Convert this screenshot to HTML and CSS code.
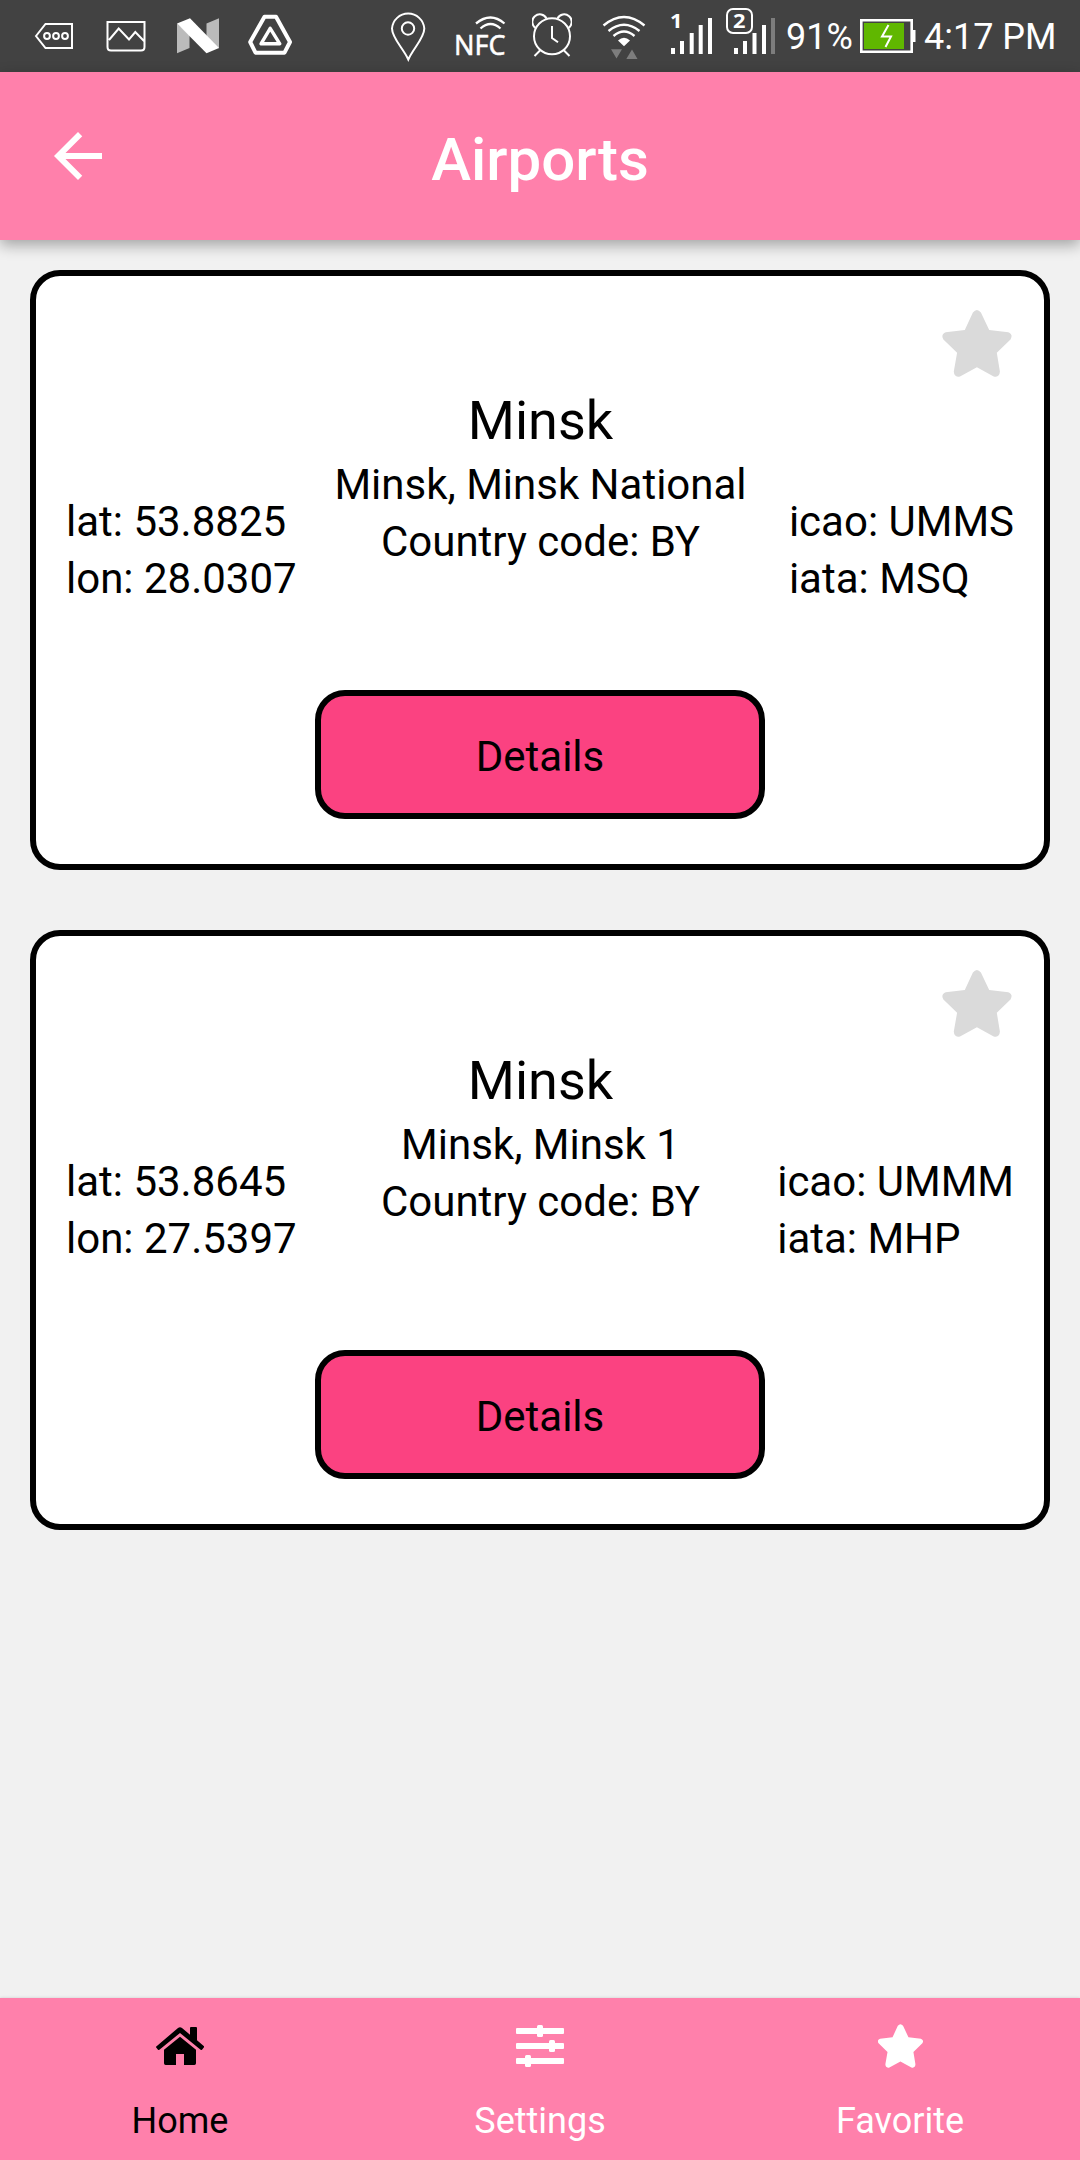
FILE: index.html
```html
<!DOCTYPE html>
<html lang="en">
<head>
<meta charset="utf-8">
<title>Airports</title>
<link rel="stylesheet" href="styles.css">
</head>
<body>
<svg class="defs" width="0" height="0" aria-hidden="true">
  <symbol id="star" viewBox="0 0 69 67">
    <path d="M22.3 20 30.4 2.6Q34.4-2.4 38.4 2.6L46.7 20 65.8 22.2Q71 24.4 68 29.4L54.3 42.7 57.4 61.6Q57 67.9 51.2 66.4L34.4 57.2 17.5 66.4Q11.7 67.9 11.3 61.6L14.6 42.7.9 29.4Q-2 24.4 3.2 22.2Z"/>
  </symbol>
</svg>
<div class="screen">
  <div class="status">
    <div class="notices">
      <svg width="40" height="72" viewBox="34 0 40 72" fill="none" stroke="#fff" stroke-width="2"><path d="M36 36 45.5 24H72V48H45.5Z"/><circle cx="47" cy="36" r="2.9"/><circle cx="56" cy="36" r="2.9"/><circle cx="65" cy="36" r="2.9"/></svg>
      <svg width="40" height="72" viewBox="106 0 40 72" fill="none" stroke="#fff" stroke-width="2"><path d="M107.5 22H144.5V47Q144.5 50.5 141 50.5H111Q107.5 50.5 107.5 47ZM109 40 118.7 28.5 129 39.5 135.3 32 144 41"/></svg>
      <svg width="44" height="72" viewBox="176 0 44 72"><path fill="#bbb" d="M177 23.5 189.5 35V48L177 53.3ZM206.5 23.5 219 18.3V48.5L206.5 38Z"/><path fill="#fff" d="M177 23.5 190 18.3 219 48 206.5 53.3Z"/></svg>
      <svg width="46" height="72" viewBox="247 0 46 72" fill="none" stroke="#fff" stroke-linejoin="round" stroke-width="4"><path d="M264.5 16.8H276L290 42 284.5 52.7H255.5L250.2 42Z"/><path stroke-width="3.4" d="M270.2 28.3 261 43.8H279.8Z"/></svg>
    </div>
    <div class="system">
      <svg width="36" height="72" viewBox="390 0 36 72" fill="none" stroke="#fff" stroke-width="2"><path d="M408.3 59.5C403 48 392 38 392 28.5A16.2 16.2 0 0 1 424.3 28.5C424.3 38 413.5 48 408.3 59.5Z"/><circle cx="408" cy="28.5" r="6.2"/></svg>
      <svg width="56" height="72" viewBox="452 0 56 72" fill="none" stroke="#fff" stroke-width="2.3"><path d="M476 23.5Q490.5 11.5 504.5 23.5M480.5 28.5Q490.5 19.5 500.5 28.5"/><text class="nfc" x="454" y="54.5" textLength="51.5" lengthAdjust="spacingAndGlyphs">NFC</text></svg>
      <svg width="40" height="72" viewBox="532 0 40 72" fill="none" stroke="#fff" stroke-width="2"><circle cx="552" cy="36.3" r="18"/><path d="M535.5 28A7.5 7.5 0 1 1 546.5 18.5M557.5 18.5A7.5 7.5 0 1 1 568.5 28M540.5 50 534.5 56M563.5 50 569.5 56M552 26V38L558 42.3"/></svg>
      <svg width="44" height="72" viewBox="602 0 44 72" fill="none" stroke="#fff" stroke-width="2.4"><path d="M603.5 25.5Q624 8.5 644.5 25.5M608.5 31Q624 18.5 639.5 31M613.5 36Q624 27 634.5 36"/><path stroke="none" fill="#fff" d="M618 40.5Q624 35 630 40.5L624 46.3Z"/><path stroke="none" fill="#7d7d7d" d="M611 49.3H622L616.5 58.5ZM626.3 59H637.5L632 49.5Z"/></svg>
      <svg width="44" height="72" viewBox="670 0 44 72" fill="#fff"><text class="sim" x="670" y="28.3" textLength="12.5" lengthAdjust="spacingAndGlyphs">1</text><path d="M671 48h4v6h-4zM680 41h4v13h-4zM689.7 33h4v21h-4zM698.7 25h4v29h-4zM708 18h4v36h-4z"/></svg>
      <svg width="50" height="72" viewBox="726 0 50 72" fill="#fff"><rect x="727" y="9" width="25" height="24" rx="6" fill="none" stroke="#fff" stroke-width="2"/><text class="sim" x="733" y="28" textLength="12.5" lengthAdjust="spacingAndGlyphs">2</text><path d="M734 48h4v6h-4zM743 41h4v13h-4zM752.5 33h4v21h-4zM762 25h4v29h-4z"/><path fill="#7d7d7d" d="M771 18h4v36h-4z"/></svg>
      <span class="percent">91%</span>
      <svg width="56" height="72" viewBox="860 0 56 72"><path fill="none" stroke="#fff" stroke-width="2.6" d="M861.3 20.3H911.7V51.7H861.3Z"/><path fill="#fff" d="M912 30h3.5v12H912z"/><path fill="#60b700" d="M864 23h40v26h-40z"/><path fill="none" stroke="#fff" stroke-width="2" d="M888.5 25 882 36.5H891L885.5 47"/></svg>
      <span class="clock">4:17 PM</span>
    </div>
  </div>
  <header class="header">
    <svg class="back" viewBox="0 0 24 24" fill="#fff"><path d="M20 11H7.83l5.59-5.59L12 4l-8 8 8 8 1.41-1.41L7.83 13H20z"/></svg>
    <h1 class="title">Airports</h1>
  </header>
  <main class="list">
    <article class="card">
      <svg class="fav"><use href="#star"/></svg>
      <div class="info">
        <div class="side"><div>lat: 53.8825</div><div>lon: 28.0307</div></div>
        <div class="place"><h2 class="city">Minsk</h2><div>Minsk, Minsk National</div><div>Country code: BY</div></div>
        <div class="side codes"><div>icao: UMMS</div><div>iata: MSQ</div></div>
      </div>
      <button class="details">Details</button>
    </article>
    <article class="card">
      <svg class="fav"><use href="#star"/></svg>
      <div class="info">
        <div class="side"><div>lat: 53.8645</div><div>lon: 27.5397</div></div>
        <div class="place"><h2 class="city">Minsk</h2><div>Minsk, Minsk 1</div><div>Country code: BY</div></div>
        <div class="side codes"><div>icao: UMMM</div><div>iata: MHP</div></div>
      </div>
      <button class="details">Details</button>
    </article>
  </main>
  <nav class="tabs">
    <div class="tab active">
      <div class="icon"><svg width="48" height="38" viewBox="168 141 144 114" fill="currentColor"><path d="M168 200 234 144Q240 139 246 144L270 164V144Q270 141 273 141H288Q291 141 291 144V181L312 199V202L306 209Q303 211 300 208L240 159 180 208Q177 211 174 209L168 202Z"/><path d="M240 170 288 209V250Q288 255 283 255H252V222H228V255H197Q192 255 192 250V209Z"/></svg></div>
      <span>Home</span>
    </div>
    <div class="tab">
      <div class="icon"><svg width="48" height="42" viewBox="0 0 48 42" fill="currentColor"><rect y="3" width="48" height="6" rx="1"/><rect x="21" width="6" height="12" rx="1.5"/><rect y="18" width="48" height="6" rx="1"/><rect x="33" y="15" width="6" height="12" rx="1.5"/><rect y="33" width="48" height="6" rx="1"/><rect x="9" y="30" width="6" height="12" rx="1.5"/></svg></div>
      <span>Settings</span>
    </div>
    <div class="tab">
      <div class="icon"><svg width="45" height="44" fill="currentColor"><use href="#star"/></svg></div>
      <span>Favorite</span>
    </div>
  </nav>
</div>
</body>
</html>
```

FILE: styles.css
```css
* {
  box-sizing: border-box;
}

body {
  margin: 0;
  font-family: Roboto, "Liberation Sans", sans-serif;
  color: #000;
}

svg {
  display: block;
  flex: none;
}

.defs {
  display: none;
}

.screen {
  display: flex;
  flex-direction: column;
  width: 1080px;
  height: 2160px;
  background: #f1f1f1;
}

.status {
  display: flex;
  justify-content: space-between;
  height: 72px;
  padding: 0 25px 0 34px;
  background: #424242;
  color: #fff;
  font-size: 36px;
  line-height: 75px;
  white-space: nowrap;
}

.notices {
  display: flex;
  gap: 30px;
}

.notices svg:nth-of-type(2) {
  margin-left: 2px;
}

.notices svg:nth-of-type(4) {
  margin-left: -3px;
}

.system {
  display: flex;
  width: 665px;
}

.system svg:nth-of-type(2) {
  margin-left: 26px;
}

.system svg:nth-of-type(3) {
  margin-left: 24px;
}

.system svg:nth-of-type(4) {
  margin-left: 30px;
}

.system svg:nth-of-type(5) {
  margin-left: 24px;
}

.system svg:nth-of-type(6) {
  margin-left: 12px;
}

.percent {
  flex: none;
  width: 74px;
  margin-left: 10px;
}

.clock {
  flex: none;
  margin-left: 8px;
}

.nfc {
  font: 28px "Noto Sans", sans-serif;
  fill: #fff;
  stroke: #fff;
  stroke-width: 0.5px;
}

.sim {
  font: bold 20px "Noto Sans", sans-serif;
}

.header {
  display: grid;
  grid-template-columns: 1fr auto 1fr;
  height: 168px;
  padding: 0 42px;
  background: #ff80ab;
  box-shadow: 0 5px 14px rgba(0, 0, 0, 0.33);
}

.back {
  width: 72px;
  height: 72px;
  margin-top: 48px;
}

.title {
  margin: 4px 0 0;
  color: #fff;
  font-size: 60px;
  font-weight: 500;
  line-height: 168px;
}

.list {
  display: flex;
  flex: 1;
  flex-direction: column;
  gap: 60px;
  padding: 30px;
}

.card {
  display: flex;
  flex-direction: column;
  align-items: center;
  height: 600px;
  padding: 34px 30px 0;
  border: 6px solid #000;
  border-radius: 30px;
  background: #fff;
  font-size: 42px;
  line-height: 57px;
  white-space: nowrap;
}

.fav {
  width: 70px;
  height: 67px;
  margin-right: 2px;
  align-self: flex-end;
  fill: #dadada;
}

.info {
  display: grid;
  grid-template-columns: 1fr auto 1fr;
  align-self: stretch;
  height: 313px;
  padding-top: 8px;
}

.side {
  padding-top: 108px;
}

.codes {
  justify-self: end;
}

.place {
  padding-left: 1px;
  text-align: center;
}

.city {
  margin: 0;
  font-size: 54px;
  font-weight: 400;
  line-height: 71px;
}

.details {
  width: 450px;
  height: 129px;
  padding: 4px 0 0;
  border: 6px solid #000;
  border-radius: 30px;
  background: #fb4281;
  color: #000;
  font: inherit;
}

.tabs {
  display: flex;
  height: 162px;
  background: #ff80ab;
  box-shadow: 0 0 3px rgba(0, 0, 0, 0.15);
  color: #fff;
  font-size: 36px;
}

.tab {
  display: flex;
  flex: 1;
  flex-direction: column;
  align-items: center;
  padding-top: 26px;
  line-height: 44px;
}

.icon {
  display: flex;
  align-items: center;
  height: 44px;
  margin-bottom: 31px;
}

.active {
  color: #000;
}
```
